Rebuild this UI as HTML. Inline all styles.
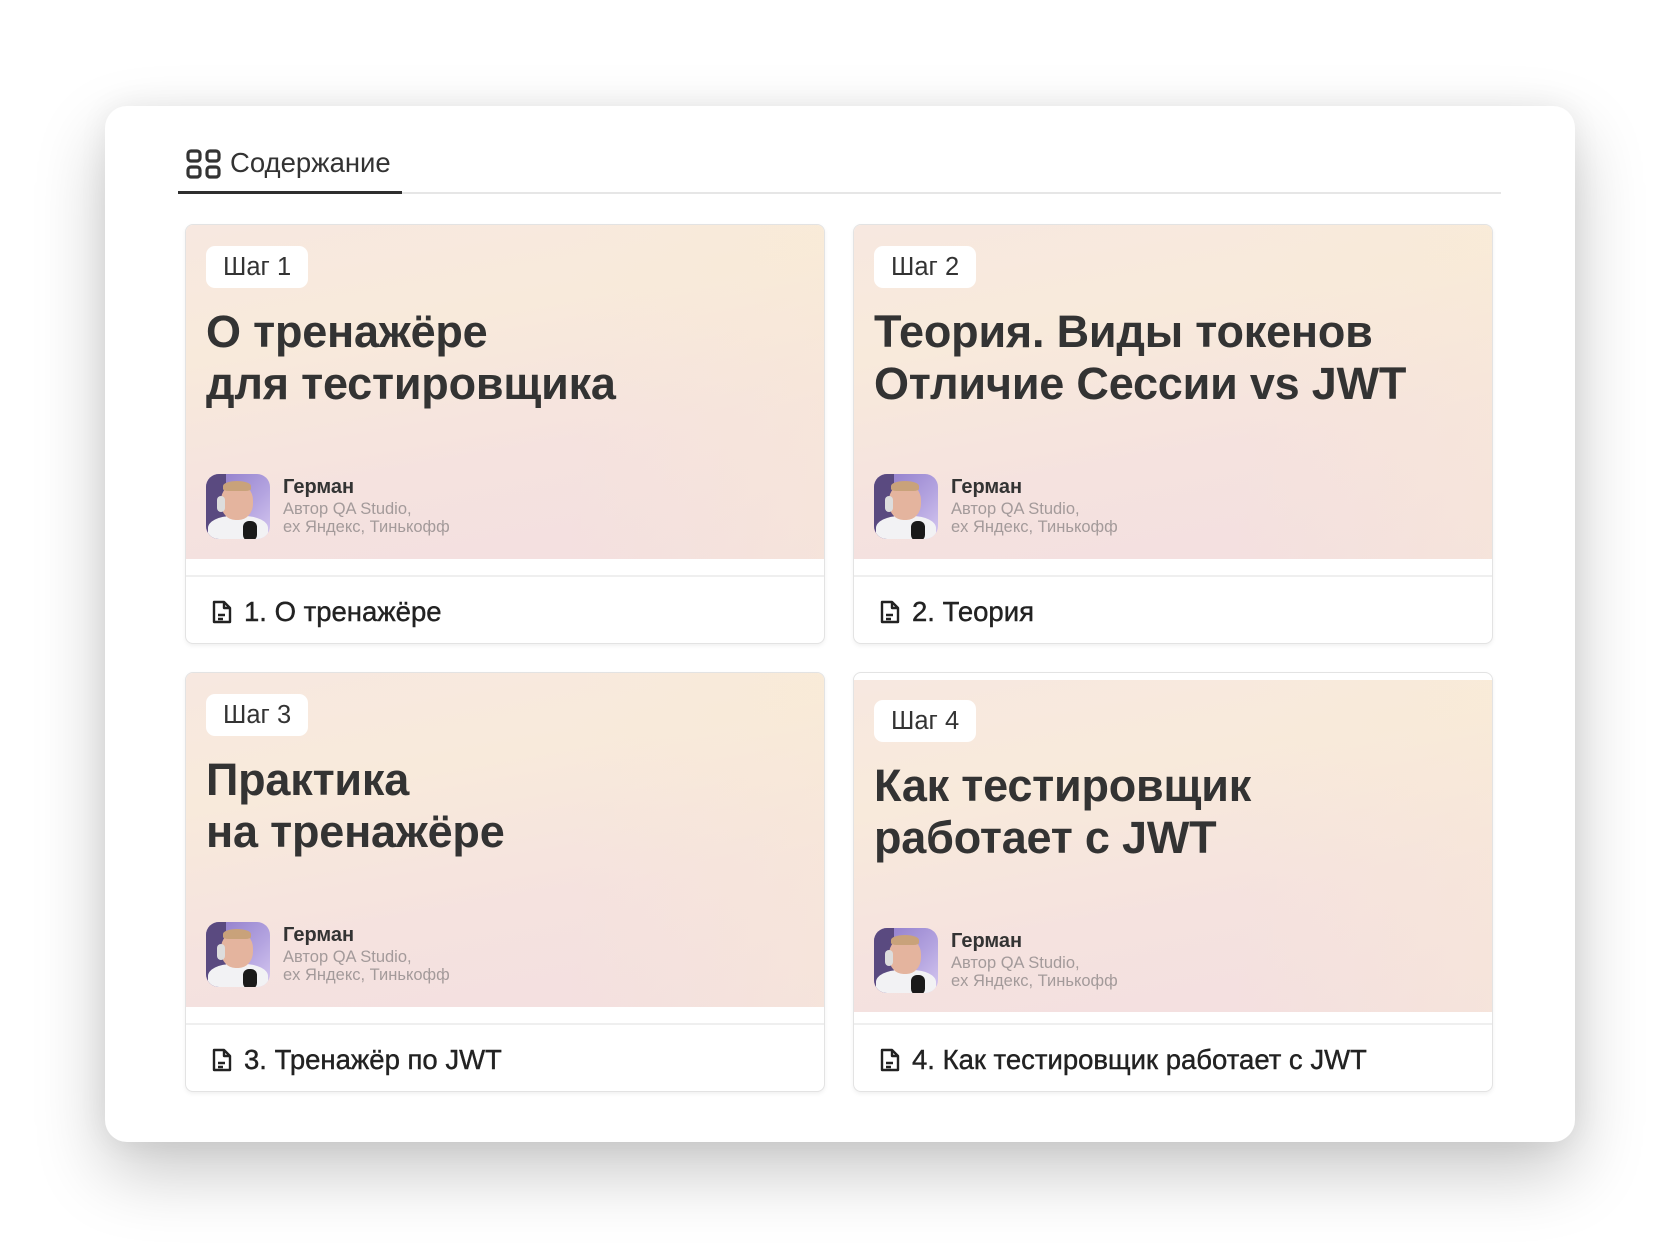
<!DOCTYPE html>
<html><head><meta charset="utf-8"><style>
*{box-sizing:border-box;margin:0;padding:0}
body{width:1680px;height:1247px;background:#fff;font-family:"Liberation Sans",Arial,sans-serif;position:relative;overflow:hidden}
.win{position:absolute;left:105px;top:106px;width:1470px;height:1036px;background:#fff;border-radius:22px;box-shadow:0 30px 70px rgba(0,0,0,.22),0 0 30px rgba(0,0,0,.06)}
.tab{position:absolute;left:178px;top:146px;height:48px;width:224px;border-bottom:3px solid #2f2f2f}
.tab svg{position:absolute;left:8px;top:3px}
.tab span{position:absolute;left:52px;top:1px;font-size:27.5px;color:#333}
.tabline{position:absolute;left:402px;top:192px;width:1099px;height:2px;background:#e6e6e6}
.card{position:absolute;width:640px;height:420px;border:1.5px solid #e3e3e3;border-radius:8px;background:#fff;overflow:hidden;box-shadow:0 2px 4px rgba(0,0,0,.06)}
.img{position:absolute;left:0;top:0;right:0;height:334px;background:linear-gradient(170deg,#f7e8e0 0%,#f8eadb 30%,#f5e2df 65%,#f3dfe0 100%)}
.img:after{content:"";position:absolute;inset:0;background:linear-gradient(90deg,rgba(255,255,255,0) 60%,rgba(250,236,210,.35) 100%)}
.badge{position:absolute;left:20px;top:21px;height:42px;padding:0 17px;background:#fff;border-radius:9px;font-size:25.5px;line-height:42px;color:#333;z-index:1}
.title{position:absolute;left:20px;top:81px;font-size:45px;line-height:52px;font-weight:bold;color:#333;letter-spacing:-0.2px;z-index:1}
.av{position:absolute;left:20px;top:249px;width:64px;height:65px;border-radius:13px;overflow:hidden;z-index:1;background:linear-gradient(135deg,#8c78c8,#b4a4e0 60%,#d6c8f0)}
.av .bg{position:absolute;left:0;top:0;width:20px;height:65px;background:#5a4a80}
.av .face{position:absolute;left:15px;top:10px;width:32px;height:36px;border-radius:45%;background:#e4b49e}
.av .hair{position:absolute;left:17px;top:7px;width:28px;height:10px;border-radius:50% 50% 20% 20%;background:#c9a27a}
.av .body{position:absolute;left:2px;top:42px;width:60px;height:30px;border-radius:40% 40% 0 0;background:#f2f2f4}
.av .mic{position:absolute;left:37px;top:47px;width:14px;height:20px;border-radius:6px;background:#1a1a1a}
.av .hp{position:absolute;left:11px;top:22px;width:8px;height:16px;border-radius:4px;background:#ddd}
.name{position:absolute;left:97px;top:251px;font-size:20px;font-weight:bold;color:#333;z-index:1}
.sub{position:absolute;left:97px;top:275px;font-size:16.5px;line-height:18px;color:#a39a9a;z-index:1}
.sep{position:absolute;left:0;right:0;top:350px;height:2px;background:#efefef}
.foot{position:absolute;left:25px;top:371px;font-size:27.5px;color:#222;display:flex;align-items:center;-webkit-text-stroke:0.4px #222}
.foot svg{margin-right:11px}
</style></head><body>
<div class="win"></div>
<div class="tab"><svg width="35" height="30" viewBox="0 0 35 30"><g fill="none" stroke="#333" stroke-width="3.2"><rect x="2" y="2" width="12" height="10" rx="3"/><rect x="21" y="2" width="12" height="10" rx="3"/><rect x="2" y="18" width="12" height="10" rx="3"/><rect x="21" y="18" width="12" height="10" rx="3"/></g></svg><span>Содержание</span></div>
<div class="tabline"></div>

<div class="card" style="left:185px;top:224px">
<div class="img"></div><div class="badge">Шаг 1</div>
<div class="title">О тренажёре<br>для тестировщика</div>
<div class="av"><div class="bg"></div><div class="body"></div><div class="face"></div><div class="hair"></div><div class="hp"></div><div class="mic"></div></div>
<div class="name">Герман</div><div class="sub">Автор QA Studio,<br>ex Яндекс, Тинькофф</div>
<div class="sep"></div>
<div class="foot"><svg width="22" height="26" viewBox="0 0 22 26"><path d="M3 3h10l6 6v14H3z M13 3v6h6 M7 16h7 M7 20h5" fill="none" stroke="#222" stroke-width="2.4" stroke-linejoin="round"/></svg>1. О тренажёре</div>
</div>

<div class="card" style="left:853px;top:224px">
<div class="img"></div><div class="badge">Шаг 2</div>
<div class="title">Теория. Виды токенов<br>Отличие Сессии vs JWT</div>
<div class="av"><div class="bg"></div><div class="body"></div><div class="face"></div><div class="hair"></div><div class="hp"></div><div class="mic"></div></div>
<div class="name">Герман</div><div class="sub">Автор QA Studio,<br>ex Яндекс, Тинькофф</div>
<div class="sep"></div>
<div class="foot"><svg width="22" height="26" viewBox="0 0 22 26"><path d="M3 3h10l6 6v14H3z M13 3v6h6 M7 16h7 M7 20h5" fill="none" stroke="#222" stroke-width="2.4" stroke-linejoin="round"/></svg>2. Теория</div>
</div>

<div class="card" style="left:185px;top:672px">
<div class="img"></div><div class="badge">Шаг 3</div>
<div class="title">Практика<br>на тренажёре</div>
<div class="av"><div class="bg"></div><div class="body"></div><div class="face"></div><div class="hair"></div><div class="hp"></div><div class="mic"></div></div>
<div class="name">Герман</div><div class="sub">Автор QA Studio,<br>ex Яндекс, Тинькофф</div>
<div class="sep"></div>
<div class="foot"><svg width="22" height="26" viewBox="0 0 22 26"><path d="M3 3h10l6 6v14H3z M13 3v6h6 M7 16h7 M7 20h5" fill="none" stroke="#222" stroke-width="2.4" stroke-linejoin="round"/></svg>3. Тренажёр по JWT</div>
</div>

<div class="card" style="left:853px;top:672px">
<div class="img" style="top:7px;height:332px"></div>
<div style="position:absolute;left:0;right:0;top:6px;bottom:0">
<div class="badge">Шаг 4</div>
<div class="title">Как тестировщик<br>работает с JWT</div>
<div class="av"><div class="bg"></div><div class="body"></div><div class="face"></div><div class="hair"></div><div class="hp"></div><div class="mic"></div></div>
<div class="name">Герман</div><div class="sub">Автор QA Studio,<br>ex Яндекс, Тинькофф</div>
</div>
<div class="sep"></div>
<div class="foot"><svg width="22" height="26" viewBox="0 0 22 26"><path d="M3 3h10l6 6v14H3z M13 3v6h6 M7 16h7 M7 20h5" fill="none" stroke="#222" stroke-width="2.4" stroke-linejoin="round"/></svg>4. Как тестировщик работает с JWT</div>
</div>
</body></html>
